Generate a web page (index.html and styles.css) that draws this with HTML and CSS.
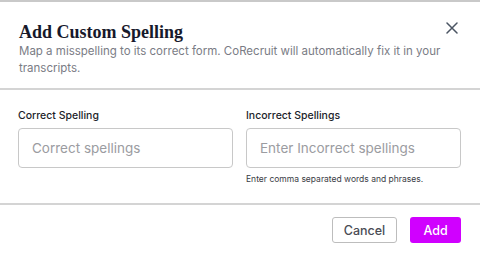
FILE: index.html
```html
<!DOCTYPE html>
<html lang="en">
<head>
    <meta charset="UTF-8">
    <meta name="viewport" content="width=device-width, initial-scale=1.0">
    <title>Add Custom Spelling</title>
    <link rel="stylesheet" href="styles.css">
</head>
<body>
    <div class="modal">
        <div class="modal-header">
            <h2 class="modal-title">Add Custom Spelling</h2>
            <p class="modal-desc">Map a misspelling to its correct form. CoRecruit will automatically fix it in your transcripts.</p>
            <button class="close-btn" aria-label="Close">
                <svg width="12" height="12" viewBox="0 0 12 12">
                    <path d="M1 1 L11 11 M11 1 L1 11" stroke="#4b5563" stroke-width="1.5" stroke-linecap="round"/>
                </svg>
            </button>
        </div>

        <div class="modal-body">
            <div class="field">
                <label class="field-label">Correct Spelling</label>
                <input class="field-input" type="text" placeholder="Correct spellings">
            </div>
            <div class="field">
                <label class="field-label">Incorrect Spellings</label>
                <input class="field-input" type="text" placeholder="Enter Incorrect spellings">
                <div class="field-help">Enter comma separated words and phrases.</div>
            </div>
        </div>

        <div class="modal-footer">
            <button class="btn btn-cancel">Cancel</button>
            <button class="btn btn-add">Add</button>
        </div>
    </div>
</body>
</html>
```

FILE: styles.css
```css
body {
    margin: 0;
    background: #fff;
    font-family: Inter, "Noto Sans", sans-serif;
}

.modal {
    width: 480px;
    height: 262px;
    border-top: 2px solid #c9c9c9;
    box-sizing: border-box;
    background: #fff;
}

.modal-header {
    position: relative;
    box-sizing: border-box;
    height: 88px;
    padding: 20px 18px 0 19px;
    border-bottom: 2px solid #d4d4d4;
}

.modal-title {
    margin: 0;
    font-family: "Liberation Serif", serif;
    font-weight: bold;
    font-size: 18px;
    line-height: 21px;
    color: #17192b;
}

.modal-desc {
    margin: 0;
    font-size: 11.5px;
    line-height: 17px;
    color: #7a7c85;
}

.close-btn {
    position: absolute;
    top: 20px;
    right: 22px;
    border: none;
    background: none;
    padding: 0;
    cursor: pointer;
}

.close-btn svg {
    display: block;
}

.modal-body {
    display: flex;
    gap: 13px;
    box-sizing: border-box;
    height: 115px;
    padding: 19px 19px 0 18px;
    border-bottom: 2px solid #d4d4d4;
}

.field {
    flex: 1;
    min-width: 0;
    display: flex;
    flex-direction: column;
}

.field-label {
    font-size: 10.5px;
    font-weight: 500;
    color: #1c1e2a;
    line-height: 13px;
    margin-bottom: 6px;
}

.field-input {
    width: 100%;
    height: 40px;
    box-sizing: border-box;
    border: 1px solid #c8c8c8;
    border-radius: 4px;
    padding: 0 13px;
    font-family: inherit;
    font-size: 13.5px;
    color: #333;
}

.field-input::placeholder {
    color: #9b9ca1;
}

.field-help {
    margin-top: 6px;
    font-size: 8.5px;
    line-height: 11px;
    color: #3a3c45;
}

.modal-footer {
    display: flex;
    justify-content: flex-end;
    gap: 13px;
    padding: 12px 19px 0 0;
}

.btn {
    height: 26px;
    border-radius: 3px;
    font-family: inherit;
    font-size: 12.5px;
    font-weight: 500;
    cursor: pointer;
}

.btn-cancel {
    width: 65px;
    background: #fff;
    border: 1px solid #bdbdbd;
    color: #4a4c55;
}

.btn-add {
    width: 51px;
    background: #d000ff;
    border: none;
    color: #fff;
}
```
